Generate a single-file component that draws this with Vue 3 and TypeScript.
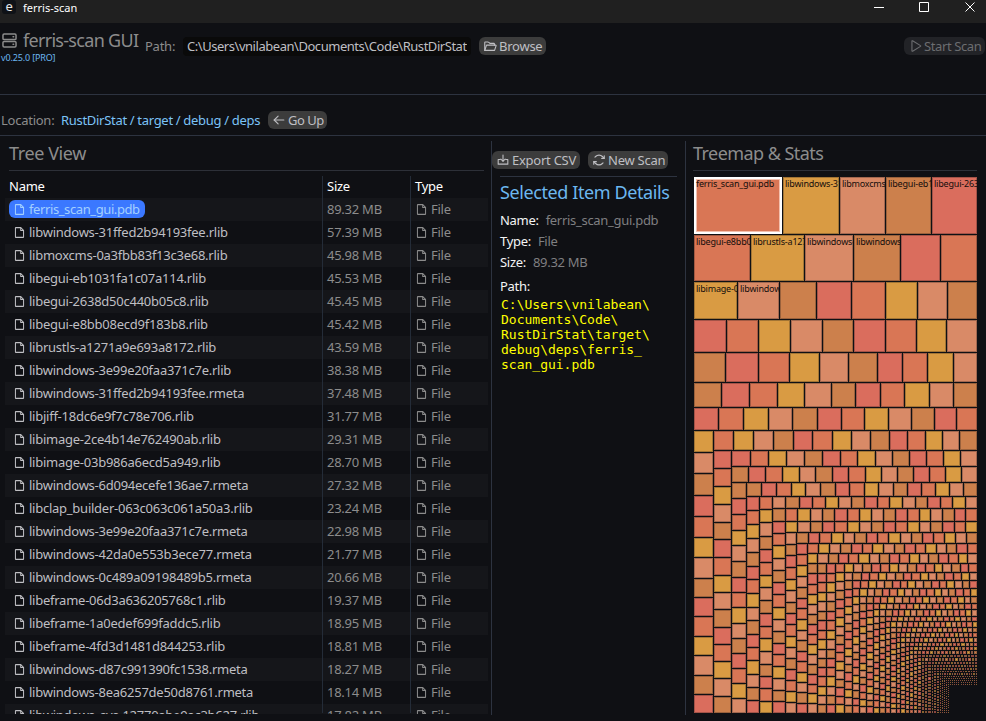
<script setup lang="ts">
import { defineComponent, h } from 'vue'

const paths: Record<string, string[]> = {
  drives: ['M56 40H200a16 16 0 0 1 16 16V100a16 16 0 0 1-16 16H56a16 16 0 0 1-16-16V56a16 16 0 0 1 16-16Z', 'M56 140H200a16 16 0 0 1 16 16V200a16 16 0 0 1-16 16H56a16 16 0 0 1-16-16V156a16 16 0 0 1 16-16Z', 'M176 78h8', 'M176 178h8'],
  folder: ['M32 208V64a8 8 0 0 1 8-8H93a8 8 0 0 1 5 2l28 20a8 8 0 0 0 5 2H200a8 8 0 0 1 8 8v24', 'M32 208l30-90a8 8 0 0 1 8-6H232a8 8 0 0 1 8 10L211 208Z'],
  play: ['M72 40V216a8 8 0 0 0 12 7l144-88a8 8 0 0 0 0-14L84 33A8 8 0 0 0 72 40Z'],
  back: ['M216 128H40', 'M112 56L40 128L112 200'],
  export: ['M176 120h40v84H40V120h40', 'M128 36V150', 'M88 110l40 40l40-40'],
  refresh: ['M176 98h48V50', 'M224 98L190 64a88 88 0 0 0-124 0L54 76', 'M80 158H32v48', 'M32 158l34 34a88 88 0 0 0 124 0l12-12'],
  file: ['M200 224H56a8 8 0 0 1-8-8V40a8 8 0 0 1 8-8h96l56 56V216a8 8 0 0 1-8 8Z', 'M152 32V88H208'],
}

const Icon = defineComponent({
  props: { name: { type: String, required: true }, size: { type: Number, default: 14 } },
  setup(props) {
    return () =>
      h(
        'svg',
        { width: props.size, height: props.size, viewBox: '0 0 256 256', fill: 'none', stroke: 'currentColor', 'stroke-width': 20, 'stroke-linejoin': 'round', 'stroke-linecap': 'round' },
        paths[props.name].map((d) => h('path', { d })),
      )
  },
})

const files: [string, string][] = [
  ['ferris_scan_gui.pdb', '89.32'],
  ['libwindows-31ffed2b94193fee.rlib', '57.39'],
  ['libmoxcms-0a3fbb83f13c3e68.rlib', '45.98'],
  ['libegui-eb1031fa1c07a114.rlib', '45.53'],
  ['libegui-2638d50c440b05c8.rlib', '45.45'],
  ['libegui-e8bb08ecd9f183b8.rlib', '45.42'],
  ['librustls-a1271a9e693a8172.rlib', '43.59'],
  ['libwindows-3e99e20faa371c7e.rlib', '38.38'],
  ['libwindows-31ffed2b94193fee.rmeta', '37.48'],
  ['libjiff-18dc6e9f7c78e706.rlib', '31.77'],
  ['libimage-2ce4b14e762490ab.rlib', '29.31'],
  ['libimage-03b986a6ecd5a949.rlib', '28.70'],
  ['libwindows-6d094ecefe136ae7.rmeta', '27.32'],
  ['libclap_builder-063c063c061a50a3.rlib', '23.24'],
  ['libwindows-3e99e20faa371c7e.rmeta', '22.98'],
  ['libwindows-42da0e553b3ece77.rmeta', '21.77'],
  ['libwindows-0c489a09198489b5.rmeta', '20.66'],
  ['libeframe-06d3a636205768c1.rlib', '19.37'],
  ['libeframe-1a0edef699faddc5.rlib', '18.95'],
  ['libeframe-4fd3d1481d844253.rlib', '18.81'],
  ['libwindows-d87c991390fc1538.rmeta', '18.27'],
  ['libwindows-8ea6257de50d8761.rmeta', '18.14'],
  ['libwindows_sys-12770abe9ac3b627.rlib', '17.82'],
]

const crumbs = ['RustDirStat', 'target', 'debug', 'deps']
const pathLines = ['C:\\Users\\vnilabean\\', 'Documents\\Code\\', 'RustDirStat\\target\\', 'debug\\deps\\ferris_', 'scan_gui.pdb']

interface Cell { x: number; y: number; w: number; h: number; color: string; label?: string }

const palette = ['#d97655', '#d99b43', '#d98a67', '#cc804c', '#da6d5d']
const MAP_W = 284
const MAP_H = 537

// Strips of the largest files: direction, thickness, then either cut offsets or a cell count.
const strips: ['row' | 'col', number, number[] | number][] = [
  ['row', 58, [89, 146, 192, 238]],
  ['row', 47, [57, 111, 160, 207, 247]],
  ['row', 38, [44, 86, 123, 158, 192, 224, 254]],
  ['row', 33, [33, 65, 97, 129, 160, 192, 223, 253]],
  ['row', 30, [32, 65, 96, 126, 155, 184, 209, 234, 260]],
  ['row', 25, [28, 56, 84, 111, 138, 162, 187, 211, 236, 260]],
  ['row', 23, [25, 50, 75, 99, 124, 148, 171, 195, 218, 241, 263]],
  ['col', 20, [22, 43, 65, 86, 107, 127, 148, 167, 186, 206, 225, 245, 264]],
  ['row', 20, [20, 40, 60, 80, 99, 119, 138, 157, 176, 194, 212, 229, 246]],
  ['col', 18, [18, 36, 54, 72, 89, 107, 125, 142, 159, 177, 194, 211, 228, 246]],
  ['row', 16, [19, 37, 55, 73, 91, 109, 126, 144, 161, 178, 195, 212, 229]],
  ['row', 16, [17, 34, 51, 68, 84, 101, 117, 134, 150, 166, 182, 198, 214, 230]],
  ['col', 15, 15],
  ['row', 14, 16],
  ['col', 13, 16],
  ['col', 13, 17],
  ['row', 12, 16],
  ['col', 13, 17],
  ['row', 13, 16],
  ['row', 11, 16],
  ['col', 11, 16],
  ['row', 11, 16],
  ['col', 11, 16],
  ['row', 10, 16],
  ['row', 10, 17],
]

function buildTreemap(): Cell[] {
  const cells: Cell[] = []
  let x = 0
  let y = 0
  const add = (x0: number, y0: number, x1: number, y1: number) => {
    const index = cells.length
    const left = Math.round(x0)
    const top = Math.round(y0)
    cells.push({
      x: left,
      y: top,
      w: Math.round(x1) - left - 1,
      h: Math.round(y1) - top - 1,
      color: palette[index % palette.length],
      label: index < 9 || index === 11 || index === 12 ? files[index][0] : undefined,
    })
  }
  const place = (dir: 'row' | 'col', thickness: number, cuts: number[]) => {
    for (let i = 1; i < cuts.length; i++) {
      if (dir === 'row') add(x + cuts[i - 1], y, x + cuts[i], y + thickness)
      else add(x, y + cuts[i - 1], x + thickness, y + cuts[i])
    }
    if (dir === 'row') y += thickness
    else x += thickness
  }

  for (const [dir, thickness, spec] of strips) {
    const length = dir === 'row' ? MAP_W - x : MAP_H - y
    const cuts =
      typeof spec === 'number'
        ? Array.from({ length: spec + 1 }, (_, i) => (length * i * (1 + 0.04 * (1 - i / spec))) / spec)
        : [0, ...spec, length]
    place(dir, thickness, cuts)
  }

  // The long tail shrinks exponentially and is squarified into the remaining corner.
  const rest = (MAP_W - x) * (MAP_H - y)
  const decay = 0.00384
  let n = 0
  const area = (i: number) => rest * decay * Math.exp(-decay * i)
  while (area(n) > 3.2) {
    const w = MAP_W - x
    const hgt = MAP_H - y
    const side = Math.min(w, hgt)
    let sum = 0
    let count = 0
    let best = Infinity
    for (;;) {
      const next = sum + area(n + count)
      const t = next / side
      const worst = Math.max((area(n) / t) / t, t / (area(n + count) / t))
      if (worst > best) break
      best = worst
      sum = next
      count++
    }
    const t = sum / side
    const cuts = [0]
    for (let i = 0; i < count; i++) cuts.push(cuts[i] + area(n + i) / t)
    place(w < hgt ? 'row' : 'col', t, cuts)
    n += count
  }
  return cells.filter((c) => c.w > 0 && c.h > 0)
}

const cells = buildTreemap()
</script>

<template>
  <div class="window">
    <header class="titlebar">
      <span class="app-icon">e</span>
      <span class="app-title">ferris-scan</span>
      <svg class="controls" width="102" height="12" viewBox="0 0 102 12">
        <path d="M0 6.5H10M45.5 1.5H54.5V10.5H45.5ZM91.5 1.5L100.5 10.5M100.5 1.5L91.5 10.5" />
      </svg>
    </header>

    <section class="toolbar">
      <div class="brand">
        <h1><Icon name="drives" :size="19" /><span>ferris-scan GUI</span></h1>
        <small>v0.25.0 [PRO]</small>
      </div>
      <label class="path-label">Path:</label>
      <div class="path-input"><span>C:\Users\vnilabean\Documents\Code\RustDirStat</span></div>
      <button class="btn browse"><Icon name="folder" /><span>Browse</span></button>
      <button class="btn start"><Icon name="play" /><span>Start Scan</span></button>
    </section>

    <nav class="location">
      <span class="muted">Location:</span>
      <div class="crumbs">
        <template v-for="(c, i) in crumbs" :key="c"><i v-if="i">/</i><a>{{ c }}</a></template>
      </div>
      <button class="btn go-up"><Icon name="back" /><span>Go Up</span></button>
    </nav>

    <main>
      <section class="tree">
        <h2>Tree View</h2>
        <div class="table">
          <div class="row head"><span>Name</span><span>Size</span><span>Type</span></div>
          <div v-for="([name, size], i) in files" :key="name" class="row" :class="{ striped: i % 2 === 0 }">
            <div class="name"><span class="chip" :class="{ selected: i === 0 }"><Icon name="file" :size="13" />{{ name }}</span></div>
            <span>{{ size }} MB</span>
            <span class="type"><Icon name="file" :size="13" />File</span>
          </div>
        </div>
      </section>

      <section class="details">
        <div class="actions">
          <button class="btn export"><Icon name="export" /><span>Export CSV</span></button>
          <button class="btn new-scan"><Icon name="refresh" /><span>New Scan</span></button>
        </div>
        <div class="info">
          <h3>Selected Item Details</h3>
          <p><b>Name:</b><span>ferris_scan_gui.pdb</span></p>
          <p><b>Type:</b><span>File</span></p>
          <p><b>Size:</b><span>89.32 MB</span></p>
          <p class="path-title"><b>Path:</b></p>
          <code><span v-for="line in pathLines" :key="line">{{ line }}</span></code>
        </div>
      </section>

      <section class="stats">
        <h2>Treemap &amp; Stats</h2>
        <svg class="map" :width="MAP_W" :height="MAP_H">
          <svg v-for="(c, i) in cells" :key="i" :x="c.x" :y="c.y" :width="c.w" :height="c.h">
            <rect :width="c.w" :height="c.h" :fill="c.color" />
            <rect v-if="c.w > 2 && c.h > 2" class="edge" x="0.5" y="0.5" :width="c.w - 1" :height="c.h - 1" />
            <rect v-else class="shade" :width="c.w" :height="c.h" />
            <template v-if="i === 0">
              <rect class="glow" x="2.5" y="2.5" :width="c.w - 5" :height="c.h - 5" />
              <rect class="picked" x="1" y="1" :width="c.w - 2" :height="c.h - 2" />
            </template>
            <text v-if="c.label" x="2" y="10">{{ c.label }}</text>
          </svg>
        </svg>
      </section>
    </main>
  </div>
</template>

<style>
body {
  background: #0f1014;
  overflow: hidden;
}
</style>

<style scoped>
* {
  box-sizing: border-box;
}
.window {
  width: 986px;
  height: 721px;
  overflow: hidden;
  display: flex;
  flex-direction: column;
  background: #0f1014;
  color: #8c8c8c;
  font: 13px/18px 'Noto Sans', 'Open Sans', sans-serif;
  letter-spacing: -0.25px;
  white-space: nowrap;
}
h1, h2, h3, p {
  margin: 0;
  font-weight: 400;
}
svg {
  flex: none;
  display: block;
}
.titlebar {
  height: 23px;
  flex: none;
  background: #202020;
  display: flex;
  align-items: flex-start;
  padding-left: 2px;
}
.app-icon {
  width: 14px;
  height: 14px;
  border-radius: 3px;
  background: #0f1217;
  color: #e8e8e8;
  font-size: 13px;
  line-height: 12px;
  text-align: center;
}
.app-title {
  margin-left: 7px;
  color: #fff;
  font-size: 11px;
  line-height: 15px;
  letter-spacing: 0;
}
.controls {
  margin: 1px 10px 0 auto;
  fill: none;
  stroke: #fff;
}
.toolbar {
  height: 72px;
  flex: none;
  display: flex;
  align-items: flex-start;
  padding-top: 7px;
  border-bottom: 1px solid #2d3340;
}
.brand {
  width: 145px;
}
h1 {
  display: flex;
  align-items: center;
  gap: 4px;
  height: 20px;
  font-size: 18px;
  letter-spacing: -0.7px;
}
.brand small {
  display: block;
  margin-left: 1px;
  margin-top: 1px;
  font-size: 9px;
  line-height: 14px;
  color: #6cb7f0;
  letter-spacing: -0.15px;
}
.path-label {
  margin-top: 7px;
  width: 38px;
}
.path-input {
  width: 288px;
  height: 19px;
  margin-top: 7px;
  padding: 0 4px;
  border-radius: 4px;
  background: #0a0a0a;
  color: #bfbfc3;
  letter-spacing: -0.46px;
}
.path-input span {
  display: block;
  overflow: hidden;
}
.btn {
  height: 18px;
  border: 0;
  border-radius: 6px;
  background: #3c3c3c;
  color: #bfbfc3;
  font: inherit;
  letter-spacing: inherit;
  display: flex;
  align-items: center;
  gap: 2px;
  padding: 0 0 0 4px;
}
.browse {
  width: 67px;
  margin: 7px 0 0 8px;
}
.start {
  width: 81px;
  margin: 7px 1px 0 auto;
  background: #222327;
  color: #6c6d70;
  letter-spacing: -0.4px;
}
.location {
  height: 41px;
  flex: none;
  display: flex;
  align-items: center;
  padding: 10px 0 0 1px;
  border-bottom: 1px solid #2d3340;
}
.location .muted {
  width: 60px;
}
.crumbs {
  display: flex;
  gap: 3px;
  width: 207px;
  color: #7cc3f7;
  letter-spacing: -0.3px;
}
.crumbs i {
  font-style: normal;
}
.go-up {
  width: 59px;
  letter-spacing: -0.5px;
}
main {
  flex: 1;
  display: flex;
  padding-top: 5px;
}
h2 {
  height: 30px;
  font-size: 18px;
  line-height: 24px;
  letter-spacing: -0.4px;
  border-bottom: 1px solid #2d3038;
}
.tree {
  width: 491px;
  height: 574px;
  overflow: hidden;
}
.tree h2 {
  margin: 0 7px 0 9px;
}
.table {
  margin: 5px 3px 0 5px;
  height: 538px;
  overflow: hidden;
  position: relative;
}
.table::before,
.table::after {
  content: '';
  position: absolute;
  top: 0;
  bottom: 1px;
  left: 317px;
  width: 1px;
  background: #242c38;
  z-index: 1;
}
.table::after {
  left: 405px;
}
.row {
  display: grid;
  grid-template-columns: 318px 88px 1fr;
  align-items: start;
  height: 23px;
  padding-top: 2px;
}
.row > span {
  padding-left: 4px;
}
.row.head {
  height: 22px;
  padding-top: 1px;
  color: #fff;
}
.striped {
  background: #15161a;
}
.name {
  display: flex;
  padding-left: 4px;
}
.chip {
  display: flex;
  align-items: center;
  gap: 3px;
  height: 18px;
  padding: 0 5px 0 4px;
  color: #bfbfc3;
}
.chip.selected {
  background: #3b78ff;
  border-radius: 6px;
  color: #a3d0ff;
  letter-spacing: -0.4px;
}
.type {
  display: flex;
  align-items: center;
  gap: 3px;
}
.details {
  width: 195px;
  height: 574px;
  border: solid #2d3340;
  border-width: 0 1px;
}
.actions {
  display: flex;
  gap: 8px;
  padding-top: 10px;
}
.export {
  width: 88px;
}
.new-scan {
  width: 80px;
}
.info {
  margin: 7px 8px 0 8px;
  border-top: 1px solid #2d3340;
  color: #7f7f81;
}
h3 {
  margin-top: 4px;
  height: 29px;
  font-size: 18px;
  line-height: 23px;
  letter-spacing: -0.4px;
  color: #6cb7f0;
}
p {
  height: 21px;
  line-height: 21px;
  display: flex;
  gap: 7px;
  letter-spacing: -0.3px;
}
p b {
  font-weight: 400;
  color: #f4f4f4;
}
.path-title {
  margin-top: 3px;
}
code {
  display: block;
  padding-left: 1px;
  font: 13px/15px 'DejaVu Sans Mono', monospace;
  letter-spacing: 0;
  color: #ffff00;
}
code span {
  display: block;
}
.stats {
  padding: 0 8px 0 7px;
}
.stats h2 {
  width: 284px;
  letter-spacing: -0.55px;
}
.map {
  margin: 6px 0 0 1px;
}
.map rect {
  shape-rendering: crispEdges;
}
.edge {
  fill: none;
  stroke: #0f1014;
  stroke-opacity: 0.27;
}
.shade {
  fill: #0f1014;
  fill-opacity: 0.4;
}
.glow {
  fill: none;
  stroke: #f3c0ae;
}
.picked {
  fill: none;
  stroke: #fff;
  stroke-width: 2;
}
.map text {
  font-size: 9px;
  letter-spacing: -0.2px;
  fill: #140e0c;
}
</style>
